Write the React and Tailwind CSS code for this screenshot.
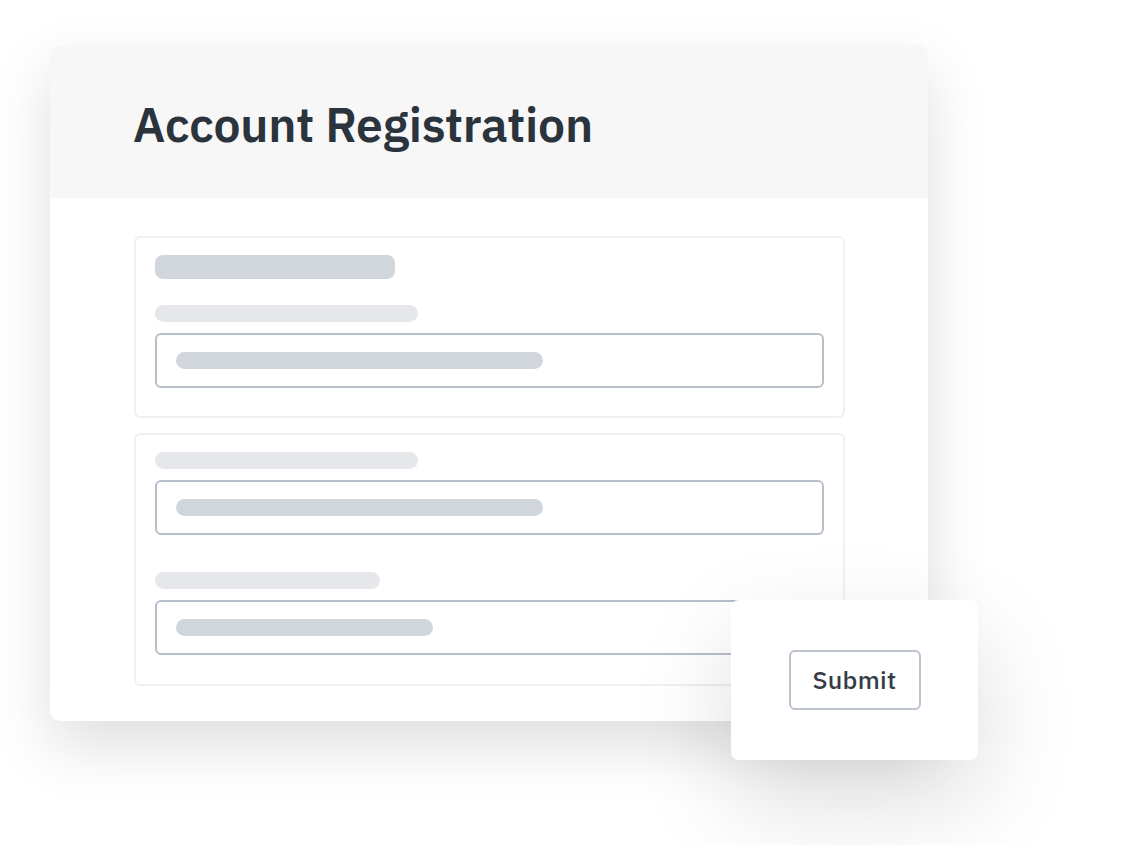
export default function App() {
  const font = { fontFamily: '"IBM Plex Sans", "Noto Sans", "Open Sans", sans-serif' };

  const Field = ({ label, bar }) => (
    <div className="flex flex-col">
      <div className={`h-[17px] rounded-full bg-[#e5e7eb] ${label}`} />
      <div className="mt-[11px] h-[55px] w-[669px] rounded-[6px] border-2 border-[#b7bfca] bg-white pl-[19px] flex items-center">
        <div className={`h-[17px] rounded-full bg-[#d1d6dd] ${bar}`} />
      </div>
    </div>
  );

  return (
    <div className="relative w-[1125px] h-[845px] overflow-hidden bg-white" style={font}>
      <div className="ml-[50px] mt-[45px] w-[878px] h-[676px] rounded-[10px] bg-white overflow-hidden shadow-[0_25px_60px_rgba(0,0,0,0.13)]">
        <div className="h-[153px] bg-[#f7f7f8] pl-[83px] flex items-center">
          <h1 className="text-[48px] font-semibold tracking-[-0.2px] text-[#2b333d] leading-none pt-[4px]">Account Registration</h1>
        </div>
        <div className="pl-[84px] pt-[38px] flex flex-col gap-[15px]">
          <div className="w-[711px] h-[182px] rounded-[6px] border-2 border-[#eef0f2] pt-[17px] pl-[19px]">
            <div className="h-[24px] w-[240px] rounded-[8px] bg-[#d1d6dd]" />
            <div className="mt-[26px]">
              <Field label="w-[263px]" bar="w-[367px]" />
            </div>
          </div>
          <div className="w-[711px] h-[253px] rounded-[6px] border-2 border-[#eef0f2] pt-[17px] pl-[19px] flex flex-col gap-[37px]">
            <Field label="w-[263px]" bar="w-[367px]" />
            <Field label="w-[225px]" bar="w-[257px]" />
          </div>
        </div>
      </div>

      <div className="absolute left-[731px] top-[600px] w-[247px] h-[160px] rounded-[8px] bg-white shadow-[0_40px_100px_rgba(0,0,0,0.14)] flex items-center justify-center">
        <button className="w-[132px] h-[60px] rounded-[6px] border-2 border-[#bcc3cd] bg-white text-[25px] font-medium tracking-[0.3px] text-[#353c45]">
          Submit
        </button>
      </div>
    </div>
  );
}
